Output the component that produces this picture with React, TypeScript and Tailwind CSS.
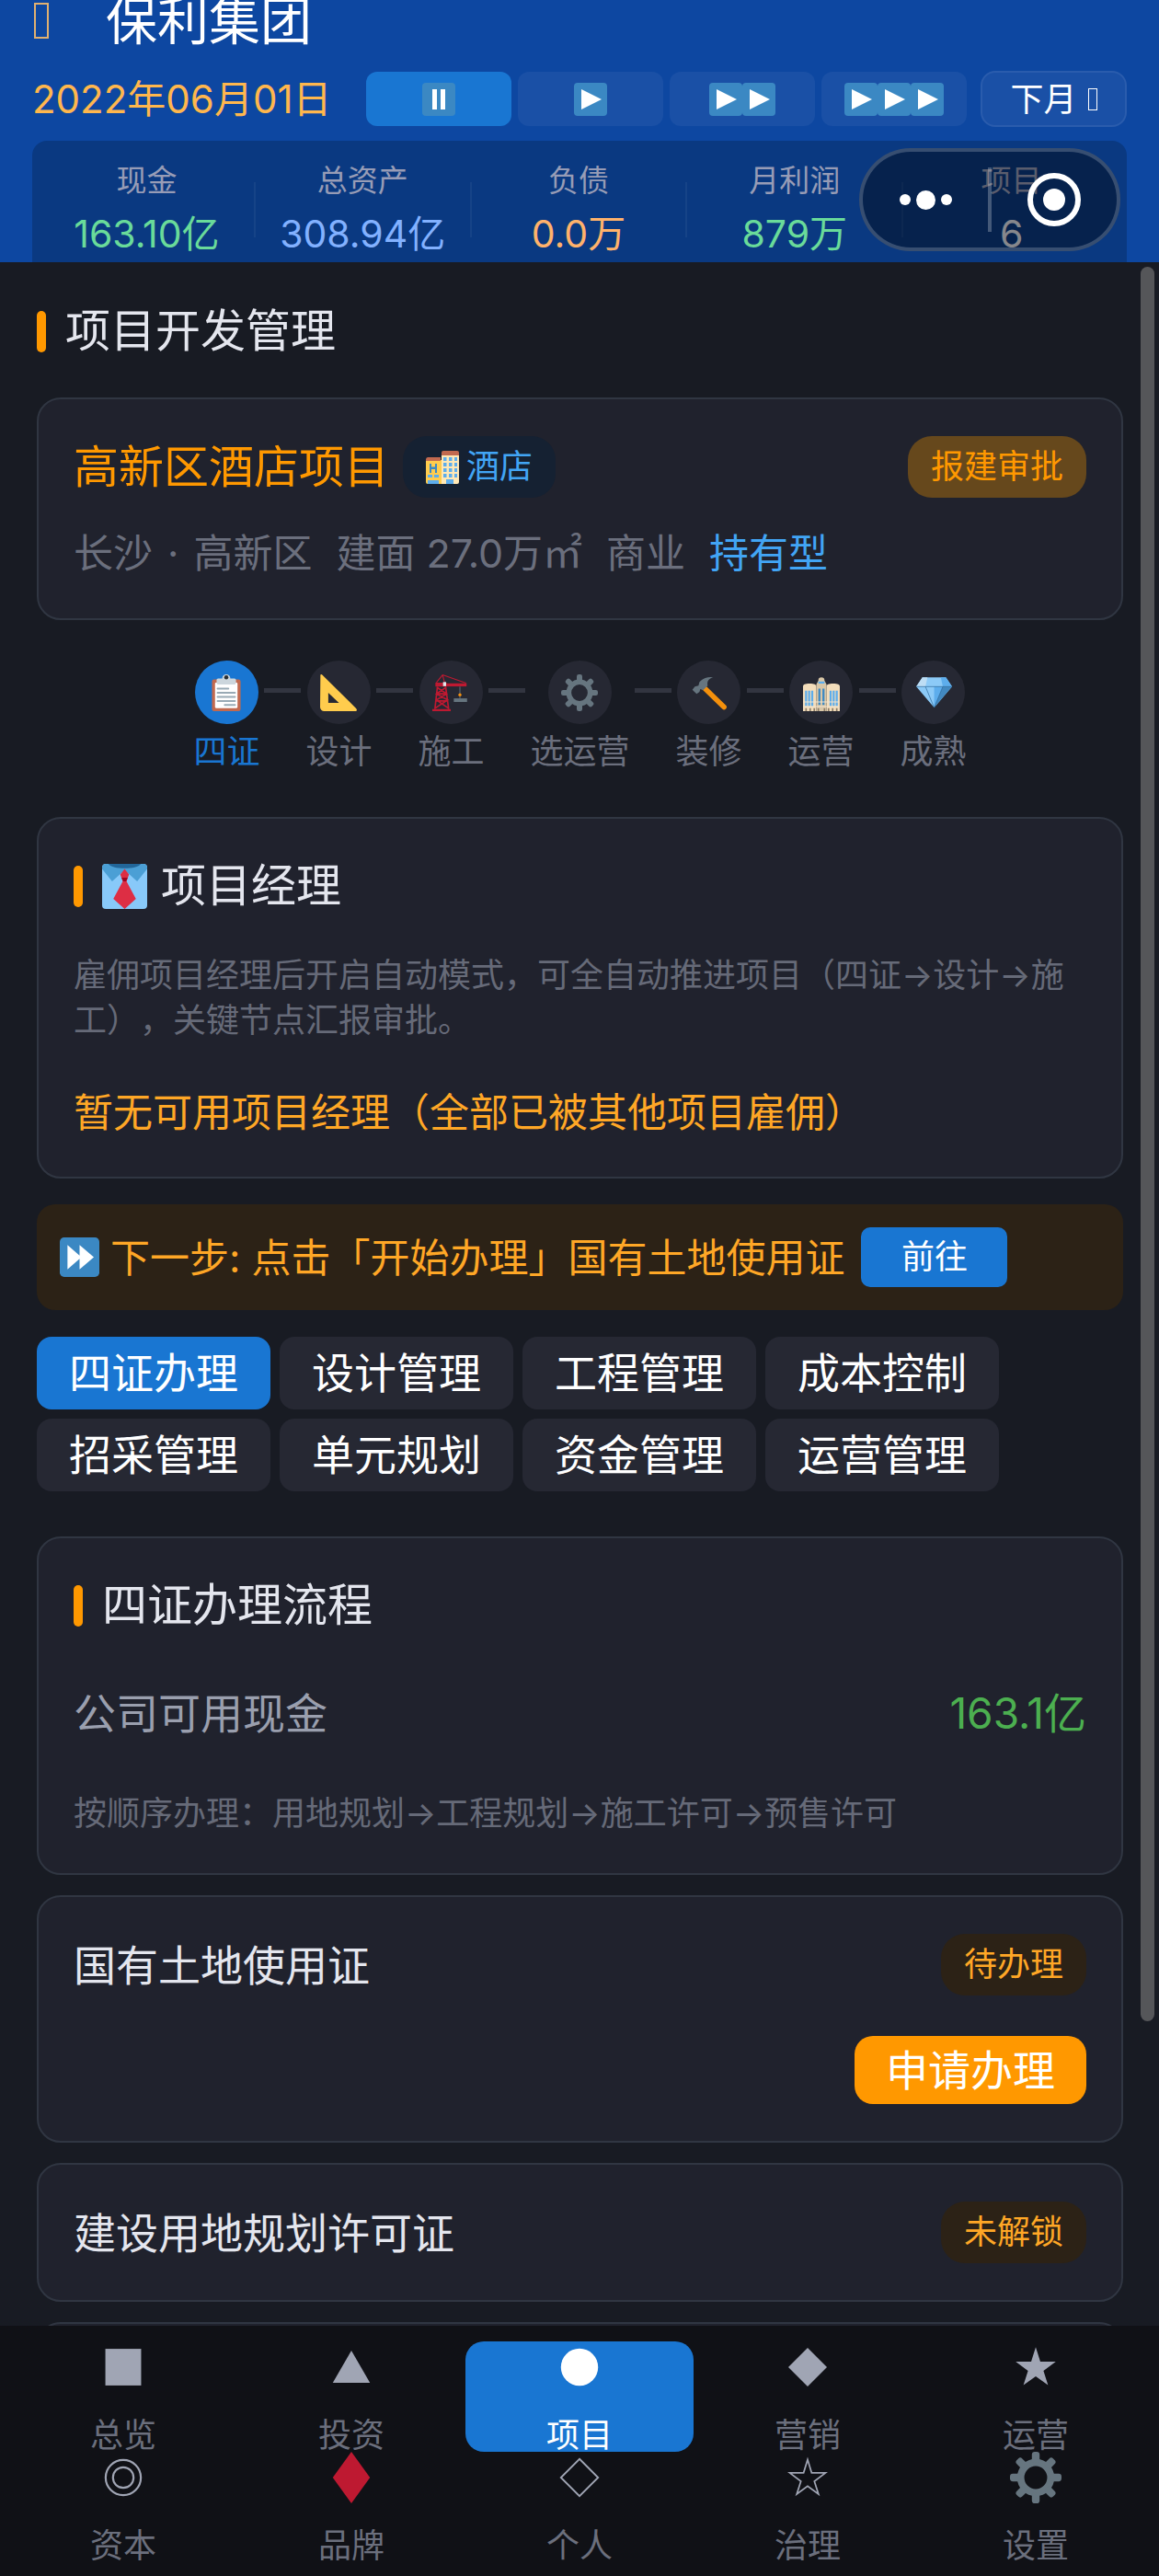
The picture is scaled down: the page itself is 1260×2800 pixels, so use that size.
import React, { useState } from "react";
import { clsx } from "clsx";

type IconProps = { className?: string };

const PLAY_BLUE = "#3b88c3";

function Svg({ className, children }: IconProps & { children: React.ReactNode }) {
  return (
    <svg viewBox="0 0 36 36" className={clsx("block shrink-0", className)} aria-hidden="true">
      {children}
    </svg>
  );
}

function PauseIcon({ className }: IconProps) {
  return (
    <Svg className={className}>
      <rect width="36" height="36" rx="4" fill={PLAY_BLUE} />
      <path d="M20 7h5v22h-5zM11 7h5v22h-5z" fill="#fff" />
    </Svg>
  );
}

function PlayIcon({ className }: IconProps) {
  return (
    <Svg className={className}>
      <rect width="36" height="36" rx="4" fill={PLAY_BLUE} />
      <path d="M8 7l22 11L8 29z" fill="#fff" />
    </Svg>
  );
}

function ForwardIcon({ className }: IconProps) {
  return (
    <Svg className={className}>
      <rect width="36" height="36" rx="4" fill={PLAY_BLUE} />
      <path d="M7 7l11 9.500V7l13 11-13 11v-9.500L7 29z" fill="#fff" />
    </Svg>
  );
}

function HotelIcon({ className }: IconProps) {
  return (
    <Svg className={className}>
      <path d="M0 10h17v26H2a2 2 0 0 1-2-2z" fill="#ffcc4d" />
      <path d="M2 7h14v4H0V9.500A2.500 2.500 0 0 1 2 7z" fill="#c1694f" />
      <path d="M17 4h19v30a2 2 0 0 1-2 2H17z" fill="#ffe8b6" />
      <path d="M19 0h15a2 2 0 0 1 2 2v3H17V2a2 2 0 0 1 2-2z" fill="#c1694f" />
      <path d="M4 14h2v3.500h4V14h2v10h-2v-4H6v4H4z" fill="#3b88c3" />
      <path
        d="M19 7h3.500v4H19zM25 7h3.500v4H25zM31 7h3v4h-3zM19 13h3.500v4H19zM25 13h3.500v4H25zM31 13h3v4h-3zM19 19h3.500v4H19zM25 19h3.500v4H25zM31 19h3v4h-3zM19 25h3.500v4H19zM25 25h3.500v4H25zM31 25h3v4h-3zM22 31h8v5h-8zM2 26h5v3H2zM9 26h5v3H9zM2 32h12v4H2z"
        fill="#5dadec"
      />
    </Svg>
  );
}

function ClipboardIcon({ className }: IconProps) {
  return (
    <Svg className={className}>
      <rect x="4" y="5" width="28" height="31" rx="2" fill="#c1694f" />
      <rect x="7" y="8" width="22" height="25" rx="1" fill="#fff" />
      <path d="M10 4h4a4 4 0 0 1 8 0h4a1.500 1.500 0 0 1 1.500 1.500V8a2 2 0 0 1-2 2h-15a2 2 0 0 1-2-2V5.500A1.500 1.500 0 0 1 10 4z" fill="#ccd6dd" />
      <circle cx="18" cy="3" r="2" fill="#292f33" />
      <path d="M9.500 14H20M9.500 18H26.500M9.500 22H26.500M9.500 26H26.500M16.500 30H26.500" stroke="#99aab5" strokeWidth="1.800" strokeLinecap="round" />
    </Svg>
  );
}

function RulerIcon({ className }: IconProps) {
  return (
    <Svg className={className}>
      <path
        d="M.3 1.200C0-.1 1.500-.3 2.500.8l32.700 32.400C36.500 34.600 36 36 34.500 36H4a4 4 0 0 1-4-4zM8 18v10h10.500z"
        fill="#ffcc4d"
        fillRule="evenodd"
      />
    </Svg>
  );
}

function CraneIcon({ className }: IconProps) {
  return (
    <Svg className={className}>
      <path d="M10 .5L4 8M10 .5L33 8.500M10 .5L12 8" fill="none" stroke="#be1931" strokeWidth="1" />
      <path d="M5 12L2.500 34M13 12l3 22M5 13l9 6-10 6 11.500 8M13 13l-9 6 11 6L3 33M4 19h10M3.500 26h11.500" fill="none" stroke="#be1931" strokeWidth="1.500" />
      <path d="M0 34h18v2H0zM3 8h11v4H3z" fill="#be1931" />
      <path d="M13 8.800h20.500v3H13z" fill="#be1931" />
      <rect x="10.500" y="7.500" width="3" height="4" fill="#e1e8ed" />
      <path d="M27 12v7M27 21v3" stroke="#66757f" strokeWidth=".8" />
      <circle cx="27" cy="20" r="1.500" fill="#f4900c" />
      <rect x="21" y="23.500" width="13" height="3.500" fill="#66757f" />
    </Svg>
  );
}

function GearIcon({ className }: IconProps) {
  return (
    <Svg className={className}>
      <circle cx="18" cy="18" r="10.500" fill="none" stroke="#66757f" strokeWidth="5" />
      {[0, 45, 90, 135, 180, 225, 270, 315].map((a) => (
        <rect key={a} x="15.300" y="0" width="5.400" height="7.500" rx="2" fill="#66757f" transform={`rotate(${a} 18 18)`} />
      ))}
    </Svg>
  );
}

function HammerIcon({ className }: IconProps) {
  return (
    <Svg className={className}>
      <path d="M13.500 13.500L32.500 32" stroke="#f4900c" strokeWidth="5" strokeLinecap="round" />
      <path
        d="M22 2.800C16 2 11.500 4 8.500 7.500L7.500 11 4 12 1.500 15l4.200 4.200L8.500 17l.8-2.500 2.700 1 4.500-4.500C15.500 7.500 17.500 4 22 2.800z"
        fill="#66757f"
      />
    </Svg>
  );
}

function HallIcon({ className }: IconProps) {
  return (
    <Svg className={className}>
      <path d="M0 12C0 10 2 9 6.500 9S13 10 13 12v24H0zM23 12c0-2 2-3 6.500-3S36 10 36 12v24H23z" fill="#f3ddbb" />
      <path d="M13 36V10l2-4c0-2 1-3 3-3s3 1 3 3l2 4v26z" fill="#d9c7a8" />
      <path d="M15 7h6v2h-6z" fill="#5dadec" />
      <path d="M2 16h2v15H2zM5 16h2v15H5zM8 16h2v15H8zM26 16h2v15h-2zM29 16h2v15h-2zM32 16h2v15h-2z" fill="#5dadec" />
      <path d="M15 14h2v16h-2zM19 14h2v16h-2z" fill="#3b88c3" />
      <path d="M0 27h36M0 31.500h36" stroke="#f3e6cf" strokeWidth="1" />
      <path d="M3 33v3M7 33v3M11 33v3M15 33v3M21 33v3M25 33v3M29 33v3M33 33v3" stroke="#8a7b66" strokeWidth="1.500" />
    </Svg>
  );
}

function GemIcon({ className }: IconProps) {
  return (
    <Svg className={className}>
      <path d="M7 3h23l6 9-17.500 20.500L1 12z" fill="#8ccaf7" />
      <path d="M7 3h5l-2 9H1z" fill="#bdddf4" />
      <path d="M30 3h-5l2 9h9z" fill="#5dadec" />
      <path d="M18.500 12H27l-8.500 20.500z" fill="#5dadec" />
      <path d="M36 12h-9l-8.500 20.500z" fill="#4289c1" />
      <path d="M1 12h35M10 12l8.500 20.500L27 12" fill="none" stroke="#2a6797" strokeWidth=".6" />
    </Svg>
  );
}

function TieIcon({ className }: IconProps) {
  return (
    <Svg className={className}>
      <rect width="36" height="36" rx="3" fill="#88c9f9" />
      <path d="M3 0h30a3 3 0 0 1 3 3v1l-8 10-10-9L8 14 0 4V3a3 3 0 0 1 3-3z" fill="#4b9fd5" />
      <path d="M5 0h26c-2 2.500-7 3.500-13 3.500S7 2.500 5 0z" fill="#226699" />
      <path d="M18 4l3.500 4.500L19.500 14 27 28l-9 8-9-8 7.500-14-2-5.500z" fill="#dd2e44" />
      <path d="M15.500 11h5l-1.300 3h-2.400z" fill="#a0041e" />
    </Svg>
  );
}

function CapsuleMenu() {
  return (
    <div className="absolute top-[161px] right-[42px] flex h-28 w-[284px] items-center rounded-full border-4 border-white/20 bg-black/40">
      <button type="button" aria-label="更多" className="flex flex-1 items-center justify-center gap-1.5">
        <span className="size-3 rounded-full bg-white" />
        <span className="size-[21px] rounded-full bg-white" />
        <span className="size-3 rounded-full bg-white" />
      </button>
      <span className="h-[70px] w-1 bg-white/25" />
      <button type="button" aria-label="关闭" className="flex flex-1 items-center justify-center">
        <span className="flex size-[58px] items-center justify-center rounded-full border-[6px] border-white">
          <span className="size-6 rounded-full bg-white" />
        </span>
      </button>
    </div>
  );
}

const speeds = [
  { label: "暂停", count: 0 },
  { label: "一倍速", count: 1 },
  { label: "二倍速", count: 2 },
  { label: "三倍速", count: 3 },
];

const stats = [
  { label: "现金", value: "163.10亿", color: "text-[#69db9a]" },
  { label: "总资产", value: "308.94亿", color: "text-[#82b1ff]" },
  { label: "负债", value: "0.0万", color: "text-[#ffb26b]" },
  { label: "月利润", value: "879万", color: "text-[#69db9a]" },
  { label: "项目", value: "6", color: "text-[#e0e2ea]" },
];

function Header() {
  const [speed, setSpeed] = useState(0);

  return (
    <header className="relative bg-[#0d47a1] px-[35px]">
      <div className="flex h-[45px] items-center gap-[62px]">
        <span className="ml-0.5 h-[39px] w-4 border-2 border-[#e0b070]" />
        <h1 className="text-[56px] leading-[44px] text-white">保利集团</h1>
      </div>

      <div className="mt-8 flex items-center justify-between">
        <time className="text-[42px] leading-[60px] text-[#ffb74d]">2022年06月01日</time>
        <div className="flex items-center gap-[7px]">
          {speeds.map((s) => (
            <button
              key={s.label}
              type="button"
              aria-label={s.label}
              onClick={() => setSpeed(s.count)}
              className={clsx(
                "flex h-[59px] w-[158px] items-center justify-center rounded-xl",
                speed === s.count ? "bg-[#1976d2]" : "bg-[#1a50a6]"
              )}
            >
              {s.count === 0 && <PauseIcon className="size-9" />}
              {Array.from({ length: s.count }).map((_, i) => (
                <PlayIcon key={i} className="size-9" />
              ))}
            </button>
          ))}
          <button
            type="button"
            className="ml-2 flex h-[61px] w-[159px] items-center justify-center gap-3 rounded-2xl border-2 border-[#2a5cad] bg-[#1a50a6] text-[36px] leading-[48px] text-white"
          >
            下月
            <span className="h-6 w-[10px] border border-white" />
          </button>
        </div>
      </div>

      <dl className="mt-[15px] grid grid-cols-5 rounded-t-2xl bg-[#0a3981] px-2 pt-[18px]">
        {stats.map((s, i) => (
          <div key={s.label} className="flex items-center">
            <div className="flex flex-1 flex-col items-center">
              <dt className="text-[33px] leading-[50px] text-[#979cb6]">{s.label}</dt>
              <dd className={clsx("pt-0.5 text-[41px] leading-[62px]", s.color)}>{s.value}</dd>
            </div>
            {i < stats.length - 1 && <span className="h-[60px] w-0.5 bg-white/5" />}
          </div>
        ))}
      </dl>

      <CapsuleMenu />
    </header>
  );
}

function Card({ className, children }: { className?: string; children: React.ReactNode }) {
  return (
    <section className={clsx("rounded-[26px] border-2 border-[#303642] bg-[#20222d] px-[38px] py-10", className)}>
      {children}
    </section>
  );
}

function Heading({ children }: { children: React.ReactNode }) {
  return (
    <h2 className="flex items-center gap-[21px] text-[49px] leading-[66px] text-[#e4e6ee]">
      <span className="h-[45px] w-[10px] rounded-full bg-[#ff9800]" />
      {children}
    </h2>
  );
}

function Badge({ className, children }: { className: string; children: React.ReactNode }) {
  return (
    <span className={clsx("flex items-center gap-2 rounded-[26px] px-[25px] text-[36px] leading-[67px]", className)}>
      {children}
    </span>
  );
}

const steps = [
  { name: "四证", Icon: ClipboardIcon },
  { name: "设计", Icon: RulerIcon },
  { name: "施工", Icon: CraneIcon },
  { name: "选运营", Icon: GearIcon },
  { name: "装修", Icon: HammerIcon },
  { name: "运营", Icon: HallIcon },
  { name: "成熟", Icon: GemIcon },
];

function Stepper() {
  return (
    <ol className="mt-11 flex justify-center">
      {steps.map(({ name, Icon }, i) => (
        <li key={name} className="flex items-start">
          {i > 0 && <span className="mx-[5px] mt-[30px] h-[5px] w-10 bg-[#323540]" />}
          <div className="flex flex-col items-center gap-1.5">
            <span
              className={clsx(
                "flex size-[69px] items-center justify-center rounded-full",
                i === 0 ? "bg-[#1976d2]" : "bg-[#262833]"
              )}
            >
              <Icon className="size-10" />
            </span>
            <span className={clsx("text-[36px] leading-[49px]", i === 0 ? "text-[#1976d2]" : "text-[#6b6f7d]")}>
              {name}
            </span>
          </div>
        </li>
      ))}
    </ol>
  );
}

const tabs = ["四证办理", "设计管理", "工程管理", "成本控制", "招采管理", "单元规划", "资金管理", "运营管理"];

function Tabs() {
  const [active, setActive] = useState(tabs[0]);

  return (
    <div className="mt-[29px] flex flex-wrap gap-[10px] pr-20">
      {tabs.map((t) => (
        <button
          key={t}
          type="button"
          onClick={() => setActive(t)}
          className={clsx(
            "rounded-2xl px-[35px] text-[46px] leading-[79px] text-white",
            active === t ? "bg-[#1976d2]" : "bg-[#262833]"
          )}
        >
          {t}
        </button>
      ))}
    </div>
  );
}

const permits = [
  { name: "国有土地使用证", status: "待办理", canApply: true },
  { name: "建设用地规划许可证", status: "未解锁", canApply: false },
  { name: "建设工程规划许可证", status: "未解锁", canApply: false },
];

function PermitCard({ name, status, canApply }: (typeof permits)[number]) {
  return (
    <Card className="mt-[22px]">
      <div className="flex items-center justify-between">
        <h3 className="text-[46px] leading-[66px] text-[#e4e6ee]">{name}</h3>
        <Badge className="bg-[#2c2216] text-[#ffa726]">{status}</Badge>
      </div>
      {canApply && (
        <div className="mt-11 flex justify-end">
          <button type="button" className="rounded-[20px] bg-[#ff9800] px-[34px] text-[46px] leading-[74px] text-white">
            申请办理
          </button>
        </div>
      )}
    </Card>
  );
}

const navItems = [
  { name: "总览", shape: <rect x="5.500" y="5.200" width="25" height="25.600" fill="currentColor" /> },
  { name: "投资", shape: <path d="M18 6.500L31 29H5z" fill="currentColor" /> },
  { name: "项目", shape: <circle cx="18" cy="18" r="13" fill="currentColor" /> },
  { name: "营销", shape: <path d="M18 4.500L31.500 18 18 31.500 4.500 18z" fill="currentColor" /> },
  {
    name: "运营",
    shape: <path d="M18 4l3.200 10.200H32l-8.600 6.400 3.200 9.900L18 24.500l-8.600 6 3.200-9.900L4 14.200h10.800z" fill="currentColor" />,
  },
  {
    name: "资本",
    shape: (
      <g fill="none" stroke="currentColor" strokeWidth="1.400">
        <circle cx="18" cy="18" r="12.300" />
        <circle cx="18" cy="18" r="7.200" />
      </g>
    ),
  },
  { name: "品牌", shape: <path d="M18 0l13 18-13 18L5 18z" fill="#be1931" /> },
  {
    name: "个人",
    shape: <path d="M18 5l13 13-13 13L5 18z" fill="none" stroke="currentColor" strokeWidth="1.200" />,
  },
  {
    name: "治理",
    shape: (
      <path
        d="M18 5.500l2.800 9.200h9.700l-7.800 5.900 2.900 9L18 24l-7.600 5.600 2.900-9-7.800-5.900h9.700z"
        fill="none"
        stroke="currentColor"
        strokeWidth="1.100"
      />
    ),
  },
  { name: "设置", shape: null },
];

function BottomNav() {
  return (
    <nav className="grid shrink-0 grid-cols-5 bg-[#101116] px-[10px] pt-[17px] pb-[15px]">
      {navItems.map(({ name, shape }) => {
        const active = name === "项目";
        return (
          <a
            key={name}
            href="#"
            className={clsx(
              "flex flex-col items-center gap-7 rounded-[20px]",
              active ? "bg-[#1976d2] text-white" : "text-[#a0a5b4]"
            )}
          >
            {shape ? <Svg className="size-14">{shape}</Svg> : <GearIcon className="size-14" />}
            <span className={clsx("text-[36px] leading-9", !active && "text-[#6b6f7d]")}>{name}</span>
          </a>
        );
      })}
    </nav>
  );
}

export default function App() {
  return (
    <div className="flex h-screen flex-col overflow-hidden bg-[#181b23] font-['Inter','Noto_Sans_CJK_SC',sans-serif]">
      <Header />

      <div className="relative min-h-0 flex-1">
        <main className="h-full overflow-hidden pt-[42px] pr-[39px] pl-10">
          <Heading>项目开发管理</Heading>

          <Card className="mt-[39px]">
            <div className="flex items-center justify-between">
              <div className="flex items-center gap-[15px]">
                <h3 className="text-[49px] leading-[66px] text-[#ff9800]">高新区酒店项目</h3>
                <Badge className="bg-[#152132] text-[#42a5f5]">
                  <HotelIcon className="size-9" />
                  酒店
                </Badge>
              </div>
              <Badge className="bg-[#66481c] text-[#ff9800]">报建审批</Badge>
            </div>
            <p className="mt-[29px] flex gap-[26px] text-[43px] leading-[62px] text-[#6b6f7d]">
              <span className="flex gap-4">
                <span>长沙</span>
                <span>·</span>
                <span>高新区</span>
              </span>
              <span>建面 27.0万㎡</span>
              <span>商业</span>
              <span className="text-[#42a5f5]">持有型</span>
            </p>
          </Card>

          <Stepper />

          <Card className="mt-[46px]">
            <Heading>
              <TieIcon className="size-[49px]" />
              <span className="-ml-1.5">项目经理</span>
            </Heading>
            <p className="mt-10 text-[36px] leading-[49px] text-[#666a78] [text-spacing-trim:space-all]">
              雇佣项目经理后开启自动模式，可全自动推进项目（四证→设计→施工），关键节点汇报审批。
            </p>
            <p className="mt-[45px] text-[43px] leading-[60px] text-[#ffa726] [text-spacing-trim:space-all]">
              暂无可用项目经理（全部已被其他项目雇佣）
            </p>
          </Card>

          <div className="mt-7 flex items-center rounded-[20px] bg-[#2c2216] p-[25px]">
            <ForwardIcon className="size-[43px]" />
            <span className="ml-3 text-[43px] leading-[64px] text-[#ffa726] [text-spacing-trim:space-all]">
              下一步: 点击「开始办理」国有土地使用证
            </span>
            <button type="button" className="ml-[18px] w-[159px] rounded-[10px] bg-[#1976d2] text-[36px] leading-[65px] text-white">
              前往
            </button>
          </div>

          <Tabs />

          <Card className="mt-[49px]">
            <Heading>四证办理流程</Heading>
            <div className="mt-[51px] flex justify-between text-[46px] leading-[66px]">
              <span className="text-[#9a9fae]">公司可用现金</span>
              <span className="text-[#4caf50]">163.1亿</span>
            </div>
            <p className="mt-[52px] text-[36px] leading-[49px] text-[#666a78]">
              按顺序办理：用地规划→工程规划→施工许可→预售许可
            </p>
          </Card>

          {permits.map((p) => (
            <PermitCard key={p.name} {...p} />
          ))}
        </main>
        <div className="absolute top-[5px] right-[5px] h-[85%] w-[15px] rounded-full bg-[#555659]" />
      </div>

      <BottomNav />
    </div>
  );
}
